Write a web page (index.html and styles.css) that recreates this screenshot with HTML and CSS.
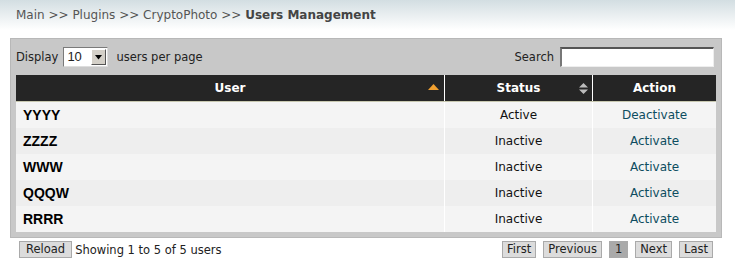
FILE: index.html
```html
<!DOCTYPE html>
<html>
<head>
<meta charset="utf-8">
<link rel="stylesheet" href="styles.css">
</head>
<body>
<div class="crumbs">Main &gt;&gt; Plugins &gt;&gt; CryptoPhoto &gt;&gt; <b>Users Management</b></div>
<div class="panel">
  <div class="controls">
    <div class="len">Display
      <span class="select"><span class="val">10</span><span class="arrow"><svg width="9" height="5" viewBox="0 0 9 5"><path d="M1 0H8L4.5 4.5Z" fill="#000"/></svg></span></span>
      users per page</div>
    <div class="search">Search <span class="input"></span></div>
  </div>
  <table class="grid">
    <thead>
      <tr>
        <th class="c-user">User<svg class="sort" width="11" height="6" viewBox="0 0 11 6"><path d="M5.5 0L11 6H0Z" fill="#f0a030"/></svg></th>
        <th class="c-status">Status<svg class="sort2" width="9" height="11" viewBox="0 0 9 11"><path d="M4.5 0L9 4.5H0Z M0 6.5H9L4.5 11Z" fill="#bbb"/></svg></th>
        <th class="c-action">Action</th>
      </tr>
    </thead>
    <tbody>
      <tr><td class="name">YYYY</td><td>Active</td><td><a>Deactivate</a></td></tr>
      <tr><td class="name">ZZZZ</td><td>Inactive</td><td><a>Activate</a></td></tr>
      <tr><td class="name">WWW</td><td>Inactive</td><td><a>Activate</a></td></tr>
      <tr><td class="name">QQQW</td><td>Inactive</td><td><a>Activate</a></td></tr>
      <tr><td class="name">RRRR</td><td>Inactive</td><td><a>Activate</a></td></tr>
    </tbody>
  </table>
</div>
<div class="footer">
  <div class="info"><span class="btn reload">Reload</span> Showing 1 to 5 of 5 users</div>
  <div class="pager">
    <span class="btn">First</span>
    <span class="btn">Previous</span>
    <span class="btn cur">1</span>
    <span class="btn">Next</span>
    <span class="btn">Last</span>
  </div>
</div>
</body>
</html>
```
FILE: styles.css
```css
html, body { margin: 0; padding: 0; background: #fff; }
body { font-family: "DejaVu Sans", Verdana, sans-serif; font-size: 11.5px; color: #222; width: 735px; }
.crumbs {
  height: 30px; line-height: 30px; padding-left: 16px;
  font-size: 12px; color: #555;
  background: linear-gradient(#d3dee2, #ffffff);
}
.crumbs b { color: #444; }
.panel {
  margin: 8px 0 0 10px; width: 700px;
  background: #c8c8c8; border: 1px solid #b8b8b8;
  padding: 0 5px 5px 5px;
}
.controls { display: flex; justify-content: space-between; align-items: center; height: 36px; }
.len { display: flex; align-items: center; }
.select {
  display: inline-flex; width: 45px; height: 20px; background: #fff;
  border: 1px solid #7a7a7a; border-right-color: #ddd; border-bottom-color: #ddd; box-sizing: border-box;
  margin: 0 8px 0 5px; font-size: 13px; font-family: "Liberation Sans", Arial, sans-serif;
}
.select .val { flex: 1; padding-left: 3px; line-height: 18px; }
.select .arrow {
  width: 15px; height: 16px; margin: 1px; background: #d4d0c8; display: flex; align-items: center; justify-content: center;
  border: 1px solid; border-color: #fff #555 #555 #fff; box-sizing: border-box;
}
.search { display: flex; align-items: center; gap: 6px; margin-right: 2px; }
.input {
  display: inline-block; width: 154px; height: 20px; background: #fff; box-sizing: border-box;
  border: 1px solid #eee; border-top: 2px solid #555; border-left: 2px solid #777;
}
.grid { width: 700px; border-collapse: collapse; table-layout: fixed; }
.grid th {
  background: #252525; color: #fff; font-weight: bold; font-size: 12px; height: 26px; padding: 0;
  text-align: center; position: relative; border-bottom: 1px solid #c8c8b0;
}
.grid th + th, .grid td + td { border-left: 1px solid #fff; }
.c-user { width: 428px; }
.c-status { width: 147px; }
.sort { position: absolute; right: 5px; top: 9px; }
.sort2 { position: absolute; right: 4px; top: 8px; }
.grid td { height: 26px; padding: 0; text-align: center; color: #111; font-size: 12px; }
.grid tbody tr:nth-child(odd) td { background: #f4f4f4; }
.grid tbody tr:nth-child(even) td { background: #eeeeee; }
.grid td.name { text-align: left; padding-left: 7px; font-family: "Liberation Sans", Arial, sans-serif; font-weight: bold; font-size: 14px; color: #000; }
.grid a { color: #0d4d60; }
.footer { display: flex; justify-content: space-between; align-items: center; margin-top: 3px; padding: 0 22px 0 19px; }
.info { display: flex; align-items: center; gap: 3px; }
.pager { display: flex; gap: 7px; }
.btn {
  display: inline-block; height: 17px; line-height: 15px; padding: 0 4px; box-sizing: border-box;
  border: 1px solid #aaa; background: #dcdcdc; color: #222; font-size: 11.5px;
}
.btn.reload { padding: 0 6px; }
.btn.cur { background: #aaaaaa; border-color: #aaa; padding: 0 5px; }
```
